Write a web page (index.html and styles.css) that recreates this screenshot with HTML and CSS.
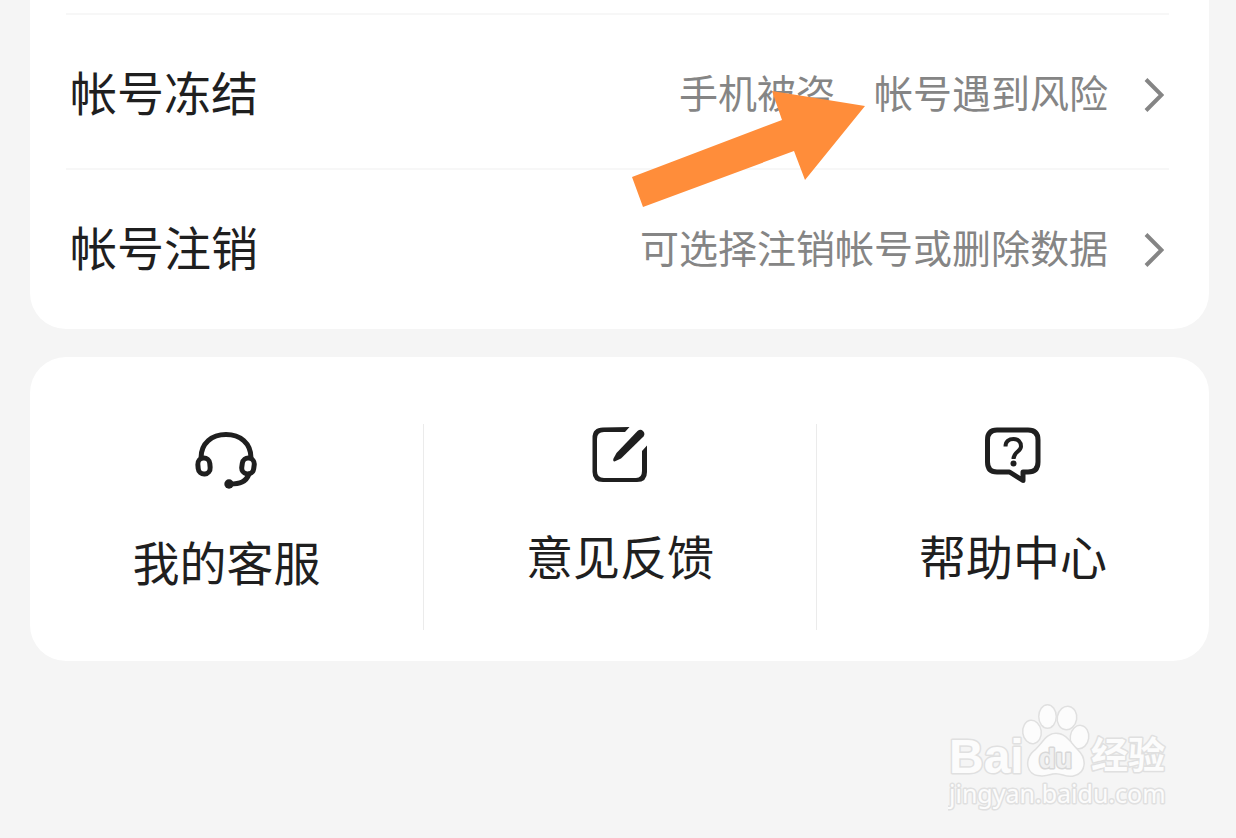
FILE: index.html
```html
<!DOCTYPE html>
<html lang="zh-CN">
<head>
    <meta charset="UTF-8">
    <meta name="viewport" content="width=device-width, initial-scale=1.0">
    <title>帐号与安全</title>
    <link rel="stylesheet" href="styles.css">
</head>
<body>
    <main class="page">
        <!-- Account settings -->
        <section class="card settings">
            <a href="#" class="row">
                <span class="row-title">帐号冻结</span>
                <span class="row-desc">手机被盗　帐号遇到风险</span>
                <svg class="chevron" viewBox="0 0 20 36" aria-hidden="true"><path d="M2 2.5 17.5 18 2 33.5"/></svg>
            </a>
            <a href="#" class="row">
                <span class="row-title">帐号注销</span>
                <span class="row-desc">可选择注销帐号或删除数据</span>
                <svg class="chevron" viewBox="0 0 20 36" aria-hidden="true"><path d="M2 2.5 17.5 18 2 33.5"/></svg>
            </a>
            <svg class="arrow" viewBox="0 0 234 118" aria-hidden="true">
                <path d="M0 87 150 30 140 1 233 16 173 90 162 61 11 117Z"/>
            </svg>
        </section>

        <!-- Help entries -->
        <nav class="card services">
            <a href="#" class="service">
                <svg class="icon icon-headset" viewBox="0 0 64 62" aria-hidden="true">
                    <path d="M6 31C6 16 17 7.500 31 7.500S56 16 56 31"/>
                    <rect x="3" y="31" width="12" height="16" rx="6" transform="rotate(-5 9 39)"/>
                    <rect x="47" y="31" width="12" height="16" rx="6" transform="rotate(8 53 39)"/>
                    <path d="M54 47C51 55 45 57 35 57"/>
                    <circle class="dot" cx="34" cy="57" r="4.700"/>
                </svg>
                <span>我的客服</span>
            </a>
            <a href="#" class="service">
                <svg class="icon" viewBox="0 0 56 56" aria-hidden="true">
                    <path class="cut" d="M37.500 0 33 5H12Q5 5 5 12V44Q5 51 12 51H44Q50 51 50 44V24L55 18.500V45Q55 55 45 55H11Q.5 55 .5 45V11Q.5.5 11 .5Z"/>
                    <path class="cut" d="M45.500 4Q48.500 1.500 51 4T51.500 9.500L29 31.500 22.500 34.500Q20.500 34 21.500 31.500L24.500 26Z"/>
                </svg>
                <span>意见反馈</span>
            </a>
            <a href="#" class="service">
                <svg class="icon" viewBox="0 0 56 56" aria-hidden="true">
                    <path d="M12 3H43Q53 3 53 13V35Q53 45 43 45H38V53.500L24.500 45H12Q2.500 45 2.500 35V13Q2.500 3 12 3Z"/>
                    <path class="mark" d="M20.500 19.500C20.500 14.500 24 12 28.500 12S36 14.500 36 19.500C36 24.500 28.500 25 28.500 32"/>
                    <circle class="dot" cx="28.500" cy="36.500" r="3"/>
                </svg>
                <span>帮助中心</span>
            </a>
        </nav>
    </main>

    <svg class="watermark" viewBox="0 0 224 110" role="img" aria-label="Baidu 经验">
        <text class="wm-latin" x="1" y="69">Bai</text>
        <ellipse cx="84" cy="28" rx="8.500" ry="11" transform="rotate(-8 84 28)"/>
        <ellipse cx="99.500" cy="12.500" rx="8" ry="11"/>
        <ellipse cx="119" cy="14" rx="9" ry="11" transform="rotate(10 119 14)"/>
        <ellipse cx="131.500" cy="33" rx="8.500" ry="11" transform="rotate(8 131 33)"/>
        <path d="M108 30C99 30 96 38 88 46 76 55 79 71 92 71 99 72 102 69 108 69S120 73 126 71C138 68 138 54 129 46 122 39 118 30 108 30Z"/>
        <text class="wm-du" x="91" y="64">du</text>
        <text class="wm-cjk" x="143" y="65">经验</text>
        <text class="wm-url" x="1" y="99">jingyan.baidu.com</text>
    </svg>
</body>
</html>
```
FILE: styles.css
```css
* {
    margin: 0;
    padding: 0;
    box-sizing: border-box;
}

body {
    font-family: "Noto Sans CJK SC", sans-serif;
    background: #f5f5f5;
    color: #1f1f1f;
    min-height: 100vh;
    position: relative;
}

a {
    color: inherit;
    text-decoration: none;
}

.page {
    display: flex;
    flex-direction: column;
    gap: 28px;
    padding: 0 27px 0 30px;
}

.card {
    background: #fff;
    border-radius: 36px;
}

.settings {
    position: relative;
    border-radius: 0 0 36px 36px;
    padding: 13px 40px 5px 36px;
}

.row {
    display: flex;
    align-items: center;
    height: 155px;
    padding: 6px 5px 0 4px;
    border-top: 2px solid #f7f7f7;
}

.row:last-of-type {
    height: 156px;
}

.row-title,
.row-desc {
    padding-bottom: 8px;
    line-height: 64px;
}

.row-title {
    flex: 1;
    font-size: 47px;
}

.row-desc {
    font-size: 39px;
    color: #858585;
}

.chevron {
    width: 20px;
    height: 36px;
    margin-left: 36px;
    fill: none;
    stroke: #858585;
    stroke-width: 4;
}

.arrow {
    position: absolute;
    top: 90px;
    right: 343px;
    width: 234px;
    height: 118px;
    fill: #ff8d3a;
}

.services {
    display: grid;
    grid-template-columns: repeat(3, 1fr);
    padding: 67px 0 31px;
}

.service {
    display: flex;
    flex-direction: column;
    align-items: center;
    gap: 40px;
    height: 206px;
    padding-top: 3px;
    font-size: 47px;
    line-height: 64px;
}

.service + .service {
    border-left: 1px solid #ebebeb;
}

.icon {
    width: 56px;
    height: 56px;
    fill: none;
    stroke: #1f1f1f;
    stroke-width: 5;
    stroke-linejoin: round;
    stroke-linecap: round;
}

.icon-headset {
    width: 64px;
    height: 62px;
}

.mark {
    stroke-width: 4;
    stroke-linecap: butt;
}

.dot,
.cut {
    fill: #1f1f1f;
    stroke: none;
}

.watermark {
    position: absolute;
    right: 64px;
    bottom: 24px;
    width: 224px;
    height: 110px;
    fill: #fcfcfc;
    stroke: #e0e0e0;
    stroke-width: 3;
    stroke-linejoin: round;
    paint-order: stroke;
}

.wm-latin {
    font: bold 48px "Liberation Sans", sans-serif;
}

.wm-du {
    font: bold 27px "Liberation Sans", sans-serif;
    fill: #f0f0f0;
    stroke: #d8d8d8;
}

.wm-cjk {
    font: bold 37px "Noto Sans CJK SC", sans-serif;
}

.wm-url {
    font: 25px "Noto Sans", sans-serif;
}
```
